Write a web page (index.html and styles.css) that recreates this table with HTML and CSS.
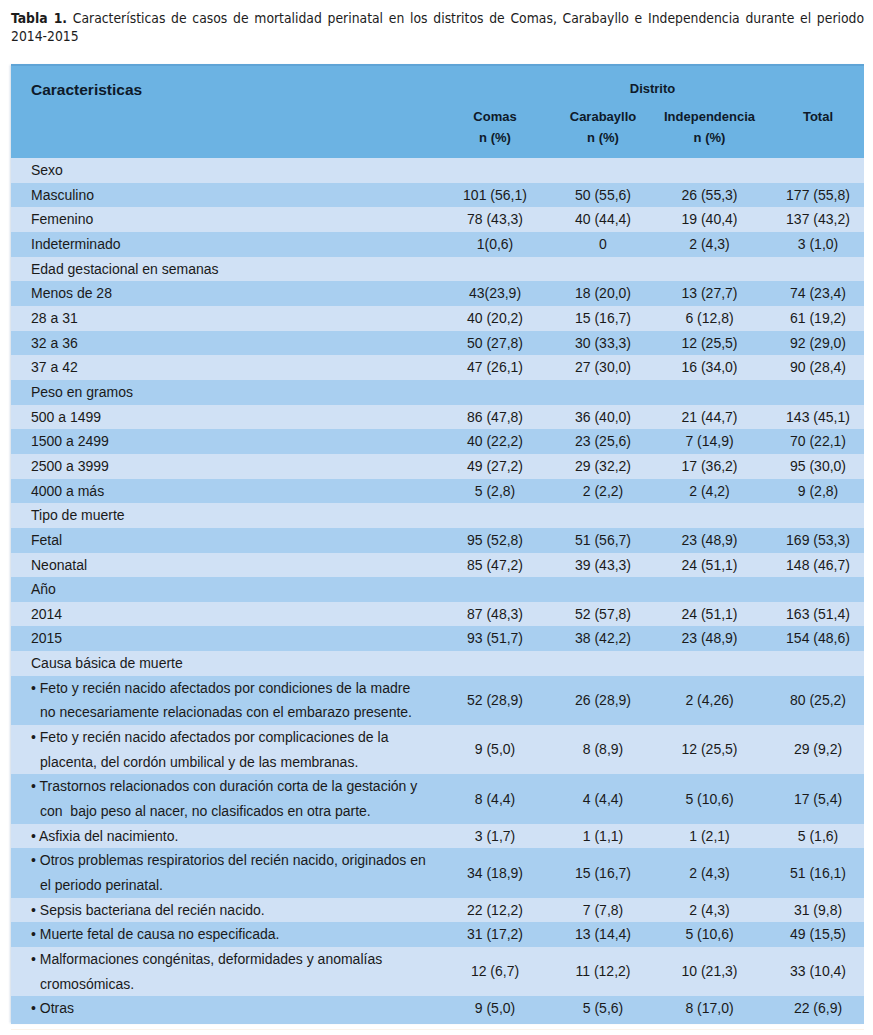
FILE: index.html
```html
<!DOCTYPE html>
<html lang="es">
<head>
<meta charset="utf-8">
<title>Tabla 1</title>
<link rel="stylesheet" href="styles.css">
</head>
<body>
<div class="page">
  <p class="caption"><span class="cap-line"><b class="cap-num">Tabla 1.</b> Características de casos de mortalidad perinatal en los distritos de Comas, Carabayllo e Independencia durante el periodo</span><span class="cap-end">2014-2015</span></p>
  <table class="data">
    <colgroup>
      <col class="c-label"><col class="c-num"><col class="c-num"><col class="c-num2"><col class="c-tot">
    </colgroup>
    <thead>
      <tr class="h1">
        <th class="hl" rowspan="2">Caracteristicas</th>
        <th colspan="4" class="hd">Distrito</th>
      </tr>
      <tr class="h2">
        <th>Comas<br>n (%)</th>
        <th>Carabayllo<br>n (%)</th>
        <th>Independencia<br>n (%)</th>
        <th class="tot">Total<br>&nbsp;</th>
      </tr>
    </thead>
    <tbody>
      <tr><td class="lab">Sexo</td><td></td><td></td><td></td><td></td></tr>
      <tr><td class="lab">Masculino</td><td>101 (56,1)</td><td>50 (55,6)</td><td>26 (55,3)</td><td class="tot">177 (55,8)</td></tr>
      <tr><td class="lab">Femenino</td><td>78 (43,3)</td><td>40 (44,4)</td><td>19 (40,4)</td><td class="tot">137 (43,2)</td></tr>
      <tr><td class="lab">Indeterminado</td><td>1(0,6)</td><td>0</td><td>2 (4,3)</td><td class="tot">3 (1,0)</td></tr>
      <tr><td class="lab">Edad gestacional en semanas</td><td></td><td></td><td></td><td></td></tr>
      <tr><td class="lab">Menos de 28</td><td>43(23,9)</td><td>18 (20,0)</td><td>13 (27,7)</td><td class="tot">74 (23,4)</td></tr>
      <tr><td class="lab">28 a 31</td><td>40 (20,2)</td><td>15 (16,7)</td><td>6 (12,8)</td><td class="tot">61 (19,2)</td></tr>
      <tr><td class="lab">32 a 36</td><td>50 (27,8)</td><td>30 (33,3)</td><td>12 (25,5)</td><td class="tot">92 (29,0)</td></tr>
      <tr><td class="lab">37 a 42</td><td>47 (26,1)</td><td>27 (30,0)</td><td>16 (34,0)</td><td class="tot">90 (28,4)</td></tr>
      <tr><td class="lab">Peso en gramos</td><td></td><td></td><td></td><td></td></tr>
      <tr><td class="lab">500 a 1499</td><td>86 (47,8)</td><td>36 (40,0)</td><td>21 (44,7)</td><td class="tot">143 (45,1)</td></tr>
      <tr><td class="lab">1500 a 2499</td><td>40 (22,2)</td><td>23 (25,6)</td><td>7 (14,9)</td><td class="tot">70 (22,1)</td></tr>
      <tr><td class="lab">2500 a 3999</td><td>49 (27,2)</td><td>29 (32,2)</td><td>17 (36,2)</td><td class="tot">95 (30,0)</td></tr>
      <tr><td class="lab">4000 a más</td><td>5 (2,8)</td><td>2 (2,2)</td><td>2 (4,2)</td><td class="tot">9 (2,8)</td></tr>
      <tr><td class="lab">Tipo de muerte</td><td></td><td></td><td></td><td></td></tr>
      <tr><td class="lab">Fetal</td><td>95 (52,8)</td><td>51 (56,7)</td><td>23 (48,9)</td><td class="tot">169 (53,3)</td></tr>
      <tr><td class="lab">Neonatal</td><td>85 (47,2)</td><td>39 (43,3)</td><td>24 (51,1)</td><td class="tot">148 (46,7)</td></tr>
      <tr><td class="lab">Año</td><td></td><td></td><td></td><td></td></tr>
      <tr><td class="lab">2014</td><td>87 (48,3)</td><td>52 (57,8)</td><td>24 (51,1)</td><td class="tot">163 (51,4)</td></tr>
      <tr><td class="lab">2015</td><td>93 (51,7)</td><td>38 (42,2)</td><td>23 (48,9)</td><td class="tot">154 (48,6)</td></tr>
      <tr><td class="lab">Causa básica de muerte</td><td></td><td></td><td></td><td></td></tr>
      <tr><td class="lab bul">• Feto y recién nacido afectados por condiciones de la madre<br>no necesariamente relacionadas con el embarazo presente.</td><td>52 (28,9)</td><td>26 (28,9)</td><td>2 (4,26)</td><td class="tot">80 (25,2)</td></tr>
      <tr><td class="lab bul">• Feto y recién nacido afectados por complicaciones de la<br>placenta, del cordón umbilical y de las membranas.</td><td>9 (5,0)</td><td>8 (8,9)</td><td>12 (25,5)</td><td class="tot">29 (9,2)</td></tr>
      <tr><td class="lab bul">• Trastornos relacionados con duración corta de la gestación y<br>con &nbsp;bajo peso al nacer, no clasificados en otra parte.</td><td>8 (4,4)</td><td>4 (4,4)</td><td>5 (10,6)</td><td class="tot">17 (5,4)</td></tr>
      <tr><td class="lab bul">• Asfixia del nacimiento.</td><td>3 (1,7)</td><td>1 (1,1)</td><td>1 (2,1)</td><td class="tot">5 (1,6)</td></tr>
      <tr><td class="lab bul">• Otros problemas respiratorios del recién nacido, originados en<br>el periodo perinatal.</td><td>34 (18,9)</td><td>15 (16,7)</td><td>2 (4,3)</td><td class="tot">51 (16,1)</td></tr>
      <tr><td class="lab bul">• Sepsis bacteriana del recién nacido.</td><td>22 (12,2)</td><td>7 (7,8)</td><td>2 (4,3)</td><td class="tot">31 (9,8)</td></tr>
      <tr><td class="lab bul">• Muerte fetal de causa no especificada.</td><td>31 (17,2)</td><td>13 (14,4)</td><td>5 (10,6)</td><td class="tot">49 (15,5)</td></tr>
      <tr><td class="lab bul">• Malformaciones congénitas, deformidades y anomalías<br>cromosómicas.</td><td>12 (6,7)</td><td>11 (12,2)</td><td>10 (21,3)</td><td class="tot">33 (10,4)</td></tr>
      <tr class="last"><td class="lab bul">• Otras</td><td>9 (5,0)</td><td>5 (5,6)</td><td>8 (17,0)</td><td class="tot">22 (6,9)</td></tr>
    </tbody>
  </table>
  <div class="rule"></div>
</div>
</body>
</html>
```

FILE: styles.css
```css
html, body {
  margin: 0;
  padding: 0;
  background: #ffffff;
}

.page {
  width: 853px;
  padding: 9px 0 0 11px;
}

.caption {
  margin: 0 0 19px 0;
  font-family: "DejaVu Sans Condensed", "DejaVu Sans", sans-serif;
  font-stretch: condensed;
  font-size: 13.8px;
  line-height: 18px;
  color: #1c1c1c;
}

.cap-line {
  display: block;
  white-space: nowrap;
  text-align: justify;
  text-align-last: justify;
}

.cap-end {
  display: block;
}

.cap-num {
  font-weight: bold;
}

.data {
  width: 853px;
  border-collapse: collapse;
  table-layout: fixed;
  font-family: "Liberation Sans", Arial, sans-serif;
  font-size: 14px;
  color: #1a1a1a;
  box-shadow: -2px 0 2px -1px rgba(120, 150, 180, 0.35);
}

.c-label { width: 430px; }
.c-num { width: 108px; }
.c-num2 { width: 105px; }
.c-tot { width: 102px; }

.data thead tr {
  background: #6cb3e3;
}

.data thead th {
  font-family: "Liberation Sans", Arial, sans-serif;
  font-weight: bold;
  font-size: 13px;
  color: #0e1a2a;
  padding: 0;
}

.h1 th {
  border-top: 2px solid #5fa4d6;
}

.data th.hl {
  text-align: left;
  vertical-align: top;
  padding: 15px 0 0 20px;
  font-size: 15.5px;
}

.data th.hd {
  height: 25px;
  vertical-align: top;
  padding-top: 15px;
  text-align: center;
}

.h2 th {
  height: 52px;
  vertical-align: top;
  line-height: 21px;
  text-align: center;
  padding-top: 0;
}

.data th.tot,
.data td.tot {
  padding-left: 10px;
}

.data tbody tr {
  background: #a9cff0;
}

.data tbody tr:nth-child(odd) {
  background: #d0e1f5;
}

.data td {
  padding: 0;
  line-height: 24.65px;
  text-align: center;
  vertical-align: middle;
  white-space: nowrap;
}

.data td.lab {
  text-align: left;
  padding-left: 20px;
}

.data td.bul {
  padding-left: 29px;
  text-indent: -9px;
}

.data tr.last td {
  padding-bottom: 3px;
}

.rule {
  width: 853px;
  height: 1px;
  margin-top: 5px;
  background: #fbf3ea;
}
```
